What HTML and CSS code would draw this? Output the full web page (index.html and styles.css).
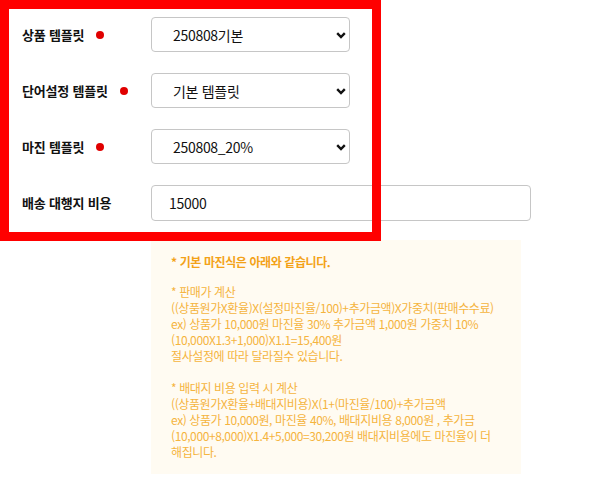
FILE: index.html
```html
<!DOCTYPE html>
<html lang="ko">
<head>
<meta charset="utf-8">
<link rel="stylesheet" href="styles.css">
</head>
<body>
<div class="page">
  <div class="form">
    <div class="row">
      <div class="label">상품 템플릿<span class="dot"></span></div>
      <div class="select-wrap">
        <select class="select"><option>250808기본</option></select>
        <svg class="chev" width="10" height="7" viewBox="0 0 10 7"><path d="M1.2 1.2 L5 5 L8.8 1.2" fill="none" stroke="#111" stroke-width="2.4"/></svg>
      </div>
    </div>
    <div class="row">
      <div class="label">단어설정 템플릿<span class="dot"></span></div>
      <div class="select-wrap">
        <select class="select"><option>기본 템플릿</option></select>
        <svg class="chev" width="10" height="7" viewBox="0 0 10 7"><path d="M1.2 1.2 L5 5 L8.8 1.2" fill="none" stroke="#111" stroke-width="2.4"/></svg>
      </div>
    </div>
    <div class="row">
      <div class="label">마진 템플릿<span class="dot"></span></div>
      <div class="select-wrap">
        <select class="select"><option>250808_20%</option></select>
        <svg class="chev" width="10" height="7" viewBox="0 0 10 7"><path d="M1.2 1.2 L5 5 L8.8 1.2" fill="none" stroke="#111" stroke-width="2.4"/></svg>
      </div>
    </div>
    <div class="row">
      <div class="label">배송 대행지 비용</div>
      <input class="input" type="text" value="15000">
    </div>
  </div>
  <div class="info">
    <p class="info-title">* 기본 마진식은 아래와 같습니다.</p>
    <p class="info-text">* 판매가 계산<br>((상품원가X환율)X(설정마진율/100)+추가금액)X가중치(판매수수료)<br>ex) 상품가 10,000원 마진율 30% 추가금액 1,000원 가중치 10%<br>(10,000X1.3+1,000)X1.1=15,400원<br>절사설정에 따라 달라질수 있습니다.</p>
    <p class="info-text gap">* 배대지 비용 입력 시 계산<br>((상품원가X환율+배대지비용)X(1+(마진율/100)+추가금액<br>ex) 상품가 10,000원, 마진율 40%, 배대지비용 8,000원 , 추가금<br>(10,000+8,000)X1.4+5,000=30,200원 배대지비용에도 마진율이 더<br>해집니다.</p>
  </div>
  <div class="highlight"></div>
</div>
</body>
</html>
```

FILE: styles.css
```css
* { box-sizing: border-box; }
html, body { margin: 0; padding: 0; background: #fff; }
body { font-family: "Noto Sans CJK KR", "Noto Sans", sans-serif; color: #111; }
.page { position: relative; width: 601px; height: 487px; }
.form { display: flex; flex-direction: column; gap: 21px; padding: 17px 0 0 22px; }
.row { display: flex; align-items: center; height: 35px; }
.label { width: 129px; flex: none; display: flex; align-items: center; font-size: 13px; font-weight: 700; letter-spacing: -0.2px; color: #111; }
.dot { width: 8px; height: 8px; border-radius: 50%; background: #e00000; margin-left: 12px; flex: none; }
.select-wrap { position: relative; width: 199px; height: 35px; }
.select { appearance: none; -webkit-appearance: none; width: 100%; height: 100%; border: 1px solid #c6c6c6; border-radius: 4px; background: #fff; padding: 0 0 0 21px; font-family: inherit; font-size: 14px; letter-spacing: -0.3px; color: #111; outline: none; }
.chev { position: absolute; right: 4px; top: 15px; }
.input { width: 380px; height: 36px; border: 1px solid #c6c6c6; border-radius: 4px; padding: 0 0 0 17px; font-family: inherit; font-size: 14px; letter-spacing: -0.3px; color: #111; outline: none; background: #fff; }
.info { margin: 20px 0 0 151px; width: 370px; height: 234px; background: #fffbf2; padding: 14px 0 0 20px; }
.info p { margin: 0; }
.info-title { font-size: 12px; line-height: 16px; font-weight: 700; color: #f3a218; letter-spacing: -0.4px; margin-bottom: 14px !important; }
.info-text { font-size: 12px; line-height: 16px; color: #f5b43e; letter-spacing: -0.4px; white-space: nowrap; }
.info-text.gap { margin-top: 16px !important; }
.highlight { position: absolute; left: 0; top: 0; width: 381px; height: 241px; border: 9px solid #ff0000; pointer-events: none; }
```
